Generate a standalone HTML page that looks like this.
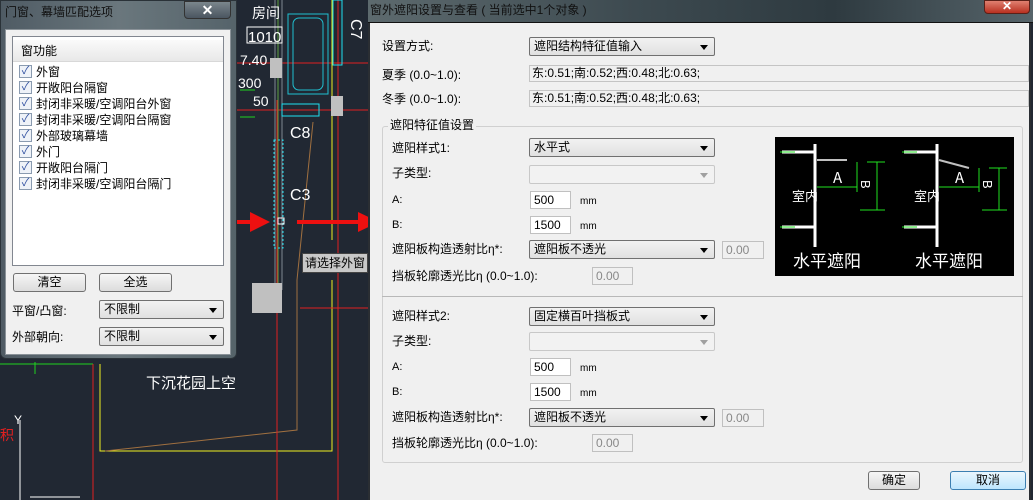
<!DOCTYPE html>
<html><head><meta charset="utf-8"><style>
*{margin:0;padding:0;box-sizing:border-box}
body{width:1033px;height:500px;overflow:hidden;background:#212833;position:relative;font-family:"Liberation Sans","Noto Sans CJK SC","WenQuanYi Zen Hei",sans-serif;font-size:12px;color:#000}
.a{position:absolute}
.lbl{position:absolute;font-size:12px;line-height:14px;white-space:nowrap}
.cb{position:absolute;height:19px;border:1px solid #707070;border-radius:2px;background:linear-gradient(#f2f2f2,#e0e0e0);font-size:12px;line-height:17px;padding-left:4px;white-space:nowrap}
.cb:after{content:"";position:absolute;right:6px;top:7px;border-left:4px solid transparent;border-right:4px solid transparent;border-top:5px solid #000}
.cb.dis{border-color:#c8c8c8;background:#f2f2f2}
.cb.dis:after{border-top-color:#a0a0a0}
.in{position:absolute;height:18px;border:1px solid #c0c0c0;background:#fff;font-size:12px;line-height:16px;padding-left:3px}
.in.dis{background:#f0f0f0;color:#888}
.fld{position:absolute;height:17px;border:1px solid #c4c4c4;background:#f0f0f0;font-size:12px;line-height:15px;padding-left:2px;white-space:nowrap}
.btn{position:absolute;height:19px;border:1px solid #707070;border-radius:3px;background:linear-gradient(#f6f6f6,#dcdcdc);text-align:center;font-size:12px;line-height:17px}
.ck{display:inline-block;width:13px;height:13px;border:1px solid #8a9bb0;background:#eef2f8;vertical-align:middle;margin-right:4px;position:relative;top:-1px;color:#3050a0;font-size:11px;line-height:11px;text-align:center}
.li{height:16px;line-height:16px;font-size:12px;padding-left:6px;white-space:nowrap}
</style></head><body>
<svg class="a" style="left:0;top:0" width="1033" height="500">
<g fill="none" stroke-width="1">
<line x1="0" y1="364" x2="93" y2="364" stroke="#1fd21f"/>
<line x1="93" y1="364" x2="93" y2="500" stroke="#e02020"/>
<line x1="35" y1="362" x2="35" y2="374" stroke="#1fd21f"/>
<rect x="100" y="108" width="232" height="93" stroke="#ffff30" transform="translate(0,0)" opacity="0"/>
<polyline points="100,364 100,451 332,451 332,280" stroke="#f0f020"/>
<polyline points="105,451 297,430 297,280 313,122" stroke="#a07040"/>
<line x1="277" y1="100" x2="277" y2="500" stroke="#e02020"/>
<line x1="338" y1="0" x2="338" y2="500" stroke="#e02020"/>
<line x1="237" y1="63" x2="368" y2="63" stroke="#e02020"/>
<line x1="237" y1="110" x2="368" y2="110" stroke="#e02020"/>
<line x1="300" y1="308" x2="368" y2="308" stroke="#e02020"/>
<line x1="332" y1="0" x2="332" y2="240" stroke="#f0f020"/>
<line x1="275" y1="0" x2="275" y2="290" stroke="#808890"/>
<line x1="282" y1="0" x2="282" y2="290" stroke="#808890"/>
<line x1="278" y1="0" x2="278" y2="300" stroke="#60a040"/>
<rect x="288" y="14" width="40" height="80" stroke="#20c0d0"/>
<rect x="293" y="18" width="30" height="72" rx="6" stroke="#20c0d0"/>
<rect x="333" y="0" width="9" height="65" stroke="#20e0f0"/>
<rect x="282" y="104" width="37" height="12" stroke="#20e0f0"/>
<rect x="274" y="140" width="9" height="108" stroke="#20e0f0" stroke-dasharray="2,2"/>
<rect x="278" y="218" width="6" height="6" stroke="#fff"/>
<rect x="247" y="27" width="35" height="16" stroke="#fff"/>
<line x1="240" y1="90" x2="255" y2="90" stroke="#1fd21f"/>
<line x1="240" y1="117" x2="255" y2="117" stroke="#1fd21f"/>
<line x1="20" y1="420" x2="20" y2="500" stroke="#fff"/>
<line x1="30" y1="497" x2="80" y2="497" stroke="#fff"/>
</g>
<rect x="270" y="58" width="12" height="20" fill="#c0c0c0"/>
<rect x="331" y="96" width="12" height="20" fill="#c0c0c0"/>
<rect x="252" y="283" width="30" height="30" fill="#c0c0c0"/>
<rect x="270" y="283" width="12" height="30" fill="#c0c0c0"/>
<g fill="#fff" font-size="14" font-family="Liberation Sans,Noto Sans CJK SC,sans-serif">
<text x="252" y="18">房间</text>
<text x="248" y="42" font-size="15">1010</text>
<text x="240" y="65" font-size="14">7.40</text>
<text x="238" y="88" font-size="14">300</text>
<text x="253" y="106" font-size="14">50</text>
<text x="290" y="138" font-size="16">C8</text>
<text x="290" y="200" font-size="16">C3</text>
<text x="352" y="32" font-size="16" transform="rotate(90 358 25)">C7</text>
<text x="146" y="388" font-size="15">下沉花园上空</text>
<text x="14" y="424" font-size="12">Y</text>
</g>
<text x="0" y="440" fill="#e02020" font-size="14" font-family="Noto Sans CJK SC,sans-serif">积</text>
<g fill="#ee1010">
<rect x="218" y="220" width="34" height="4"/><polygon points="250,212 270,222 250,232"/>
<rect x="297" y="220" width="62" height="4"/><polygon points="358,212 379,222 358,232"/>
</g>
</svg>
<div class="a" style="left:302px;top:253px;width:66px;height:20px;background:#c8c8c8;border:1px solid #444;font-size:12px;line-height:18px;padding-left:2px;white-space:nowrap;overflow:hidden">请选择外窗</div>

<!-- left dialog -->
<div class="a" style="left:0;top:0;width:237px;height:359px;background:linear-gradient(90deg,#4f5b64,#6a777d 50%,#55636a);border-radius:0 0 6px 6px;border:1px solid #2a3238"></div>
<div class="lbl" style="left:5px;top:5px;color:#111;font-size:12px">门窗、幕墙匹配选项</div>
<div class="a" style="left:184px;top:1px;width:47px;height:18px;border:1px solid #333;border-radius:0 0 4px 4px;background:linear-gradient(#7a868c,#4a5560);color:#fff;font-weight:bold;text-align:center;line-height:16px;font-size:14px">✕</div>
<div class="a" style="left:5px;top:29px;width:226px;height:326px;background:#f0f0f0;border:1px solid #8a9298"></div>
<div class="a" style="left:12px;top:36px;width:212px;height:230px;background:#fff;border:1px solid #828790">
<div style="height:22px;margin:3px 0 0 0;background:linear-gradient(#fafafa,#e8e8e8);border-bottom:1px solid #d8d8d8;padding-left:8px;line-height:22px">窗功能</div>
<div style="margin-top:2px">
<div class="li"><span class="ck">✓</span>外窗</div>
<div class="li"><span class="ck">✓</span>开敞阳台隔窗</div>
<div class="li"><span class="ck">✓</span>封闭非采暖/空调阳台外窗</div>
<div class="li"><span class="ck">✓</span>封闭非采暖/空调阳台隔窗</div>
<div class="li"><span class="ck">✓</span>外部玻璃幕墙</div>
<div class="li"><span class="ck">✓</span>外门</div>
<div class="li"><span class="ck">✓</span>开敞阳台隔门</div>
<div class="li"><span class="ck">✓</span>封闭非采暖/空调阳台隔门</div>
</div></div>
<div class="btn" style="left:13px;top:273px;width:73px">清空</div>
<div class="btn" style="left:99px;top:273px;width:73px">全选</div>
<div class="lbl" style="left:12px;top:304px">平窗/凸窗:</div>
<div class="cb" style="left:99px;top:300px;width:125px">不限制</div>
<div class="lbl" style="left:12px;top:330px">外部朝向:</div>
<div class="cb" style="left:99px;top:327px;width:125px">不限制</div>

<!-- right dialog -->
<div class="a" style="left:368px;top:0;width:665px;height:23px;background:linear-gradient(90deg,#5d6a6e,#3d4a50 40%,#2e3a40 70%,#56646a);border-bottom:1px solid #111"></div>
<div class="lbl" style="left:370px;top:3px;color:#111;font-size:12px">窗外遮阳设置与查看 ( 当前选中1个对象 )</div>
<div class="a" style="left:984px;top:0;width:46px;height:14px;border:1px solid #5a2018;border-radius:0 0 4px 4px;background:linear-gradient(#e08070,#b83020);color:#fff;font-weight:bold;text-align:center;line-height:10px;font-size:12px">✕</div>
<div class="a" style="left:368px;top:23px;width:663px;height:477px;background:#f0f0f0;border-left:2px solid #2a2e33;border-right:2px solid #2a2e33"></div>
<div class="lbl" style="left:382px;top:39px">设置方式:</div>
<div class="cb" style="left:529px;top:37px;width:186px">遮阳结构特征值输入</div>
<div class="lbl" style="left:382px;top:68px">夏季 (0.0~1.0):</div>
<div class="fld" style="left:529px;top:65px;width:500px">东:0.51;南:0.52;西:0.48;北:0.63;</div>
<div class="lbl" style="left:382px;top:92px">冬季 (0.0~1.0):</div>
<div class="fld" style="left:529px;top:90px;width:500px">东:0.51;南:0.52;西:0.48;北:0.63;</div>

<div class="a" style="left:382px;top:126px;width:641px;height:337px;border:1px solid #d0d0d0;border-radius:3px"></div>
<div class="a" style="left:382px;top:296px;width:641px;height:1px;background:#b8b8b8"></div>
<div class="lbl" style="left:388px;top:118px;background:#f0f0f0;padding:0 2px">遮阳特征值设置</div>

<div class="lbl" style="left:392px;top:141px">遮阳样式1:</div>
<div class="cb" style="left:529px;top:138px;width:186px">水平式</div>
<div class="lbl" style="left:392px;top:166px">子类型:</div>
<div class="cb dis" style="left:529px;top:165px;width:186px"></div>
<div class="lbl" style="left:392px;top:193px;font-size:11px">A:</div>
<div class="in" style="left:530px;top:191px;width:41px">500</div><div class="lbl" style="left:580px;top:195px;font-size:10px">mm</div>
<div class="lbl" style="left:392px;top:218px;font-size:11px">B:</div>
<div class="in" style="left:530px;top:216px;width:41px">1500</div><div class="lbl" style="left:580px;top:220px;font-size:10px">mm</div>
<div class="lbl" style="left:392px;top:242px">遮阳板构造透射比η*:</div>
<div class="cb" style="left:529px;top:240px;width:186px">遮阳板不透光</div>
<div class="in dis" style="left:722px;top:241px;width:42px">0.00</div>
<div class="lbl" style="left:392px;top:269px">挡板轮廓透光比η (0.0~1.0):</div>
<div class="in dis" style="left:592px;top:267px;width:41px">0.00</div>

<div class="lbl" style="left:392px;top:309px">遮阳样式2:</div>
<div class="cb" style="left:529px;top:307px;width:186px">固定横百叶挡板式</div>
<div class="lbl" style="left:392px;top:334px">子类型:</div>
<div class="cb dis" style="left:529px;top:332px;width:186px"></div>
<div class="lbl" style="left:392px;top:360px;font-size:11px">A:</div>
<div class="in" style="left:530px;top:358px;width:41px">500</div><div class="lbl" style="left:580px;top:362px;font-size:10px">mm</div>
<div class="lbl" style="left:392px;top:385px;font-size:11px">B:</div>
<div class="in" style="left:530px;top:383px;width:41px">1500</div><div class="lbl" style="left:580px;top:387px;font-size:10px">mm</div>
<div class="lbl" style="left:392px;top:410px">遮阳板构造透射比η*:</div>
<div class="cb" style="left:529px;top:408px;width:186px">遮阳板不透光</div>
<div class="in dis" style="left:722px;top:409px;width:42px">0.00</div>
<div class="lbl" style="left:392px;top:436px">挡板轮廓透光比η (0.0~1.0):</div>
<div class="in dis" style="left:592px;top:434px;width:41px">0.00</div>

<div class="btn" style="left:868px;top:471px;width:52px">确定</div>
<div class="btn" style="left:950px;top:471px;width:76px;border-color:#3c7fb1;background:linear-gradient(#eaf6fd,#bee6fd)">取消</div>

<svg class="a" style="left:775px;top:137px" width="239" height="139">
<rect width="239" height="139" fill="#000"/>
<g stroke="#fff" stroke-width="3" fill="none">
<line x1="40" y1="7" x2="40" y2="110"/><line x1="7" y1="15" x2="40" y2="15"/><line x1="7" y1="90" x2="40" y2="90"/>
<line x1="162" y1="7" x2="162" y2="110"/><line x1="129" y1="15" x2="162" y2="15"/><line x1="129" y1="90" x2="162" y2="90"/>
</g>
<line x1="42" y1="23" x2="72" y2="23" stroke="#c0c0c0" stroke-width="2"/>
<line x1="164" y1="23" x2="194" y2="31" stroke="#c0c0c0" stroke-width="2"/>
<g stroke="#20e020" stroke-width="1" fill="none">
<line x1="42" y1="50" x2="82" y2="50"/><line x1="82" y1="25" x2="82" y2="55"/>
<line x1="102" y1="25" x2="102" y2="73"/><line x1="92" y1="25" x2="110" y2="25"/><line x1="85" y1="73" x2="110" y2="73"/>
<line x1="164" y1="50" x2="204" y2="50"/><line x1="204" y1="31" x2="204" y2="55"/>
<line x1="224" y1="31" x2="224" y2="73"/><line x1="214" y1="31" x2="232" y2="31"/><line x1="207" y1="73" x2="232" y2="73"/>
<line x1="5" y1="15" x2="20" y2="15"/><line x1="5" y1="90" x2="20" y2="90"/><line x1="127" y1="15" x2="142" y2="15"/><line x1="127" y1="90" x2="142" y2="90"/>
</g>
<g fill="#fff" font-family="Noto Sans CJK SC,sans-serif">
<text x="58" y="46" font-size="15">A</text><text x="180" y="46" font-size="15">A</text>
<text x="17" y="64" font-size="13">室内</text><text x="139" y="64" font-size="13">室内</text>
<text x="18" y="130" font-size="17">水平遮阳</text><text x="140" y="130" font-size="17">水平遮阳</text>
</g>
<g fill="#fff" font-size="13" font-family="Liberation Sans,sans-serif"><text x="86" y="53" transform="rotate(90 91 48)">B</text><text x="208" y="53" transform="rotate(90 213 48)">B</text></g>
</svg>
</body></html>
